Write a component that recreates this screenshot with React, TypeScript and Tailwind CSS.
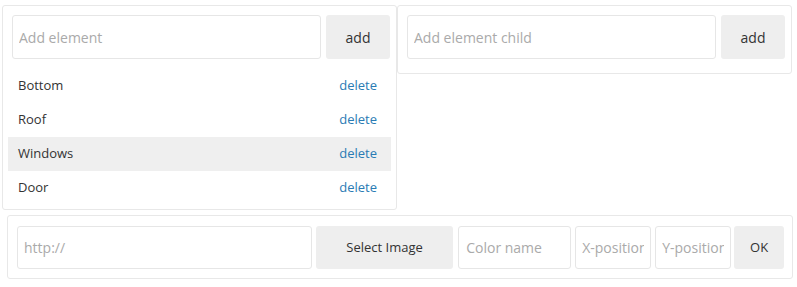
const items = ['Bottom', 'Roof', 'Windows', 'Door'];

function AddRow({ placeholder }: { placeholder: string }) {
    return (
        <div className="flex gap-[5px]">
            <input
                type="text"
                placeholder={placeholder}
                className="h-[44px] min-w-0 flex-1 rounded-[3px] border border-[#e6e6e6] bg-white px-[6px] text-[14px] text-[#333] outline-none placeholder:text-[#aaa]"
            />
            <button className="h-[44px] w-[64px] rounded-[3px] bg-[#eeeeee] text-[14px] text-[#333]">
                add
            </button>
        </div>
    );
}

export default function App() {
    return (
        <div
            className="bg-white pt-[5px] text-[#333]"
            style={{ fontFamily: '"Open Sans", "Noto Sans", sans-serif' }}
        >
            <div className="flex items-start pl-[2px]">
                {/* Elements */}
                <div className="w-[395px] rounded-[3px] border border-[#e8e8e8] pt-[9px] pr-[6px] pb-[4px] pl-[9px]">
                    <AddRow placeholder="Add element" />
                    <ul className="mt-[10px] -ml-[4px] w-[383px]">
                        {items.map((item) => (
                            <li
                                key={item}
                                className={`flex h-[34px] items-center justify-between pr-[14px] pl-[10px] text-[13px] ${item === 'Windows' ? 'bg-[#efefef]' : ''
                                    }`}
                            >
                                <span>{item}</span>
                                <a href="#" className="text-[#2a7bb4]">
                                    delete
                                </a>
                            </li>
                        ))}
                    </ul>
                </div>

                {/* Element children */}
                <div className="w-[395px] rounded-[3px] border border-[#e8e8e8] pt-[9px] pr-[6px] pb-[14px] pl-[9px]">
                    <AddRow placeholder="Add element child" />
                </div>
            </div>

            {/* Image options */}
            <div className="mt-[5px] ml-[7px] flex w-[786px] items-center rounded-[3px] border border-[#e8e8e8] pt-[10px] pr-[8px] pb-[9px] pl-[9px] text-[13px]">
                <input
                    type="text"
                    placeholder="http://"
                    className="h-[43px] w-[296px] rounded-[3px] border border-[#e6e6e6] px-[6px] text-[14px] outline-none placeholder:text-[#aaa]"
                />
                <button className="ml-[4px] h-[43px] w-[138px] rounded-[3px] bg-[#eeeeee]">
                    Select Image
                </button>
                <input
                    type="text"
                    placeholder="Color name"
                    className="ml-[5px] h-[43px] w-[113px] rounded-[3px] border border-[#e6e6e6] px-[7px] text-[14px] outline-none placeholder:text-[#aaa]"
                />
                <input
                    type="text"
                    placeholder="X-position"
                    className="ml-[4px] h-[43px] w-[76px] rounded-[3px] border border-[#e6e6e6] px-[6px] text-[14px] outline-none placeholder:text-[#aaa]"
                />
                <input
                    type="text"
                    placeholder="Y-position"
                    className="ml-[4px] h-[43px] w-[76px] rounded-[3px] border border-[#e6e6e6] px-[6px] text-[14px] outline-none placeholder:text-[#aaa]"
                />
                <button className="ml-[3px] h-[43px] w-[50px] rounded-[3px] bg-[#eeeeee]">OK</button>
            </div>
        </div>
    );
}
